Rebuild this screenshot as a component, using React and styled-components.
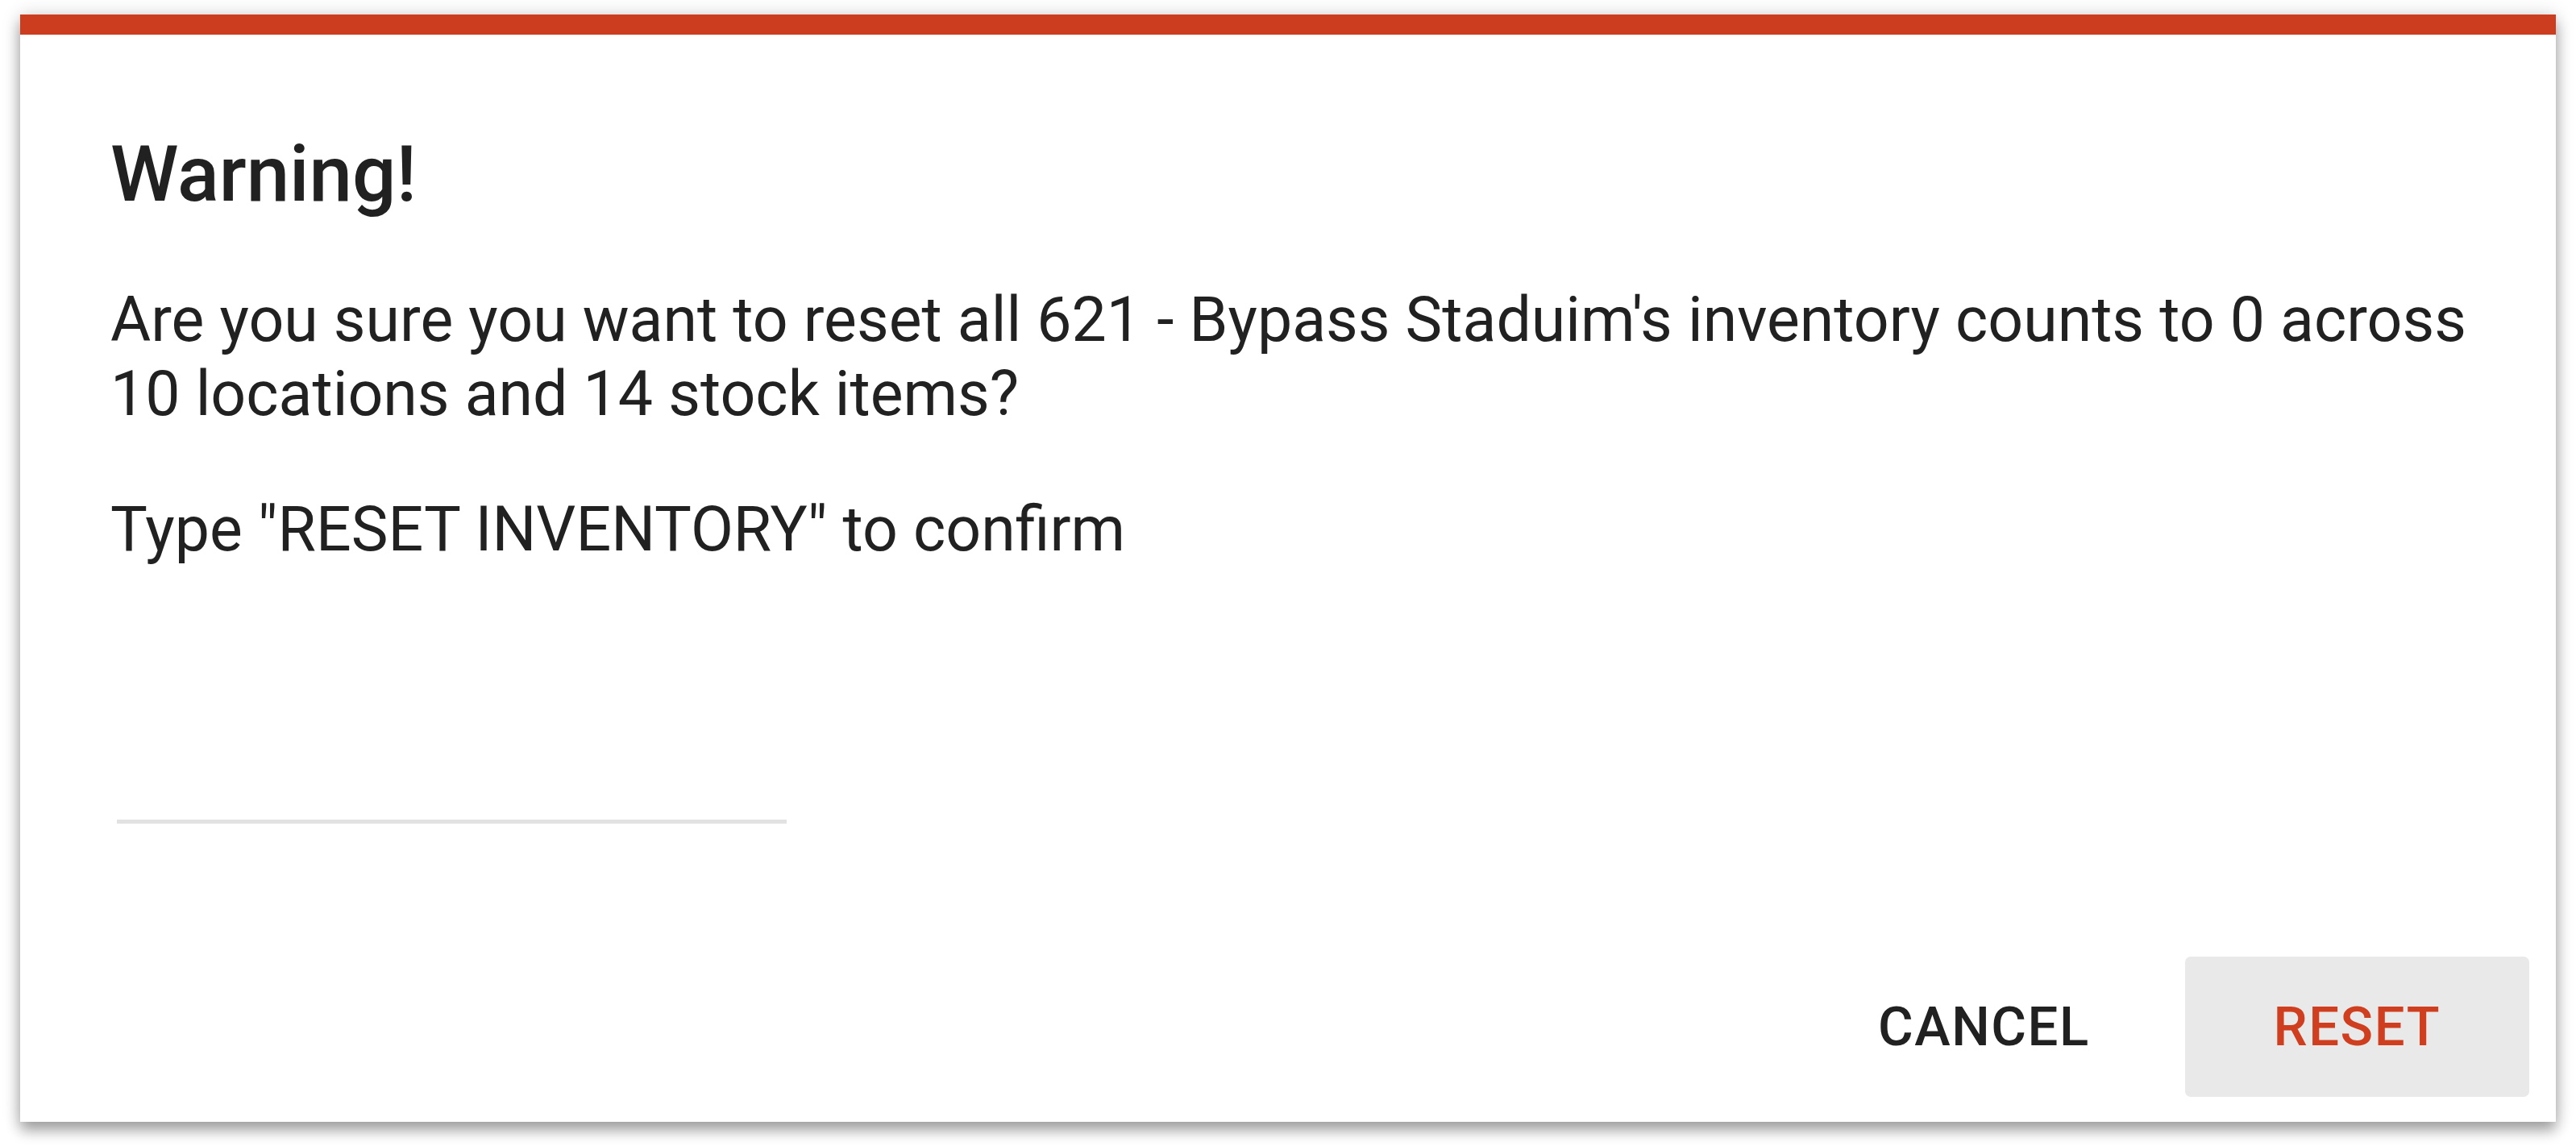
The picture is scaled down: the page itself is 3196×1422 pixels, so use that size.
import React from "react";
import styled, { createGlobalStyle } from "styled-components";

const Global = createGlobalStyle`
  html, body { margin: 0; padding: 0; background: #ffffff; }
  body { font-family: Roboto, "Noto Sans", "Liberation Sans", sans-serif; }
  * { box-sizing: border-box; }
`;

const Page = styled.div`
  width: 3196px;
  height: 1422px;
  padding: 18px 25px 30px 25px;
`;

const Dialog = styled.div`
  height: 1374px;
  background: #ffffff;
  display: flex;
  flex-direction: column;
  box-shadow: 0 11px 16px rgba(0, 0, 0, 0.32), 0 0 22px rgba(0, 0, 0, 0.16);
`;

const AccentBar = styled.div`
  height: 25px;
  flex: 0 0 25px;
  background: #cc3c1e;
`;

const Body = styled.div`
  flex: 1;
  display: flex;
  flex-direction: column;
  padding: 116px 33px 31px 112px;
`;

const Title = styled.h2`
  margin: 0 0 77px 0;
  font-size: 96px;
  line-height: 115px;
  font-weight: 500;
  color: #212121;
  letter-spacing: 0;
`;

const Text = styled.p`
  margin: 0 0 ${(p) => p.$gap || 0}px 0;
  max-width: 2980px;
  font-size: 77px;
  line-height: 92px;
  font-weight: 400;
  color: #212121;
`;

const Field = styled.div`
  margin: 0 0 0 8px;
  width: 831px;
  height: 319px;
  display: flex;
  align-items: flex-end;
`;

const Input = styled.input`
  width: 100%;
  height: 120px;
  border: none;
  border-bottom: 5px solid #e2e2e2;
  outline: none;
  background: transparent;
  font-family: inherit;
  font-size: 76px;
  color: #212121;
  padding: 0;
`;

const Actions = styled.div`
  margin-top: auto;
  display: flex;
  justify-content: flex-end;
  gap: 8px;
`;

const Button = styled.button`
  height: 174px;
  padding: 0 110px;
  border: none;
  border-radius: 7px;
  background: ${(p) => (p.$filled ? "#e9e9e9" : "transparent")};
  color: ${(p) => (p.$danger ? "#cf3f1f" : "#212121")};
  font-family: Roboto, "Liberation Sans", sans-serif;
  font-size: 67px;
  font-weight: 500;
  letter-spacing: 1.5px;
  text-transform: uppercase;
  cursor: pointer;
`;

export default function App() {
  return (
    <>
      <Global />
      <Page>
        <Dialog>
          <AccentBar />
          <Body>
            <Title>Warning!</Title>
            <Text $gap={76}>
              Are you sure you want to reset all 621 - Bypass Staduim's inventory counts to 0 across 10 locations and 14 stock items?
            </Text>
            <Text>Type "RESET INVENTORY" to confirm</Text>
            <Field>
              <Input type="text" aria-label="Confirmation" />
            </Field>
            <Actions>
              <Button>Cancel</Button>
              <Button $filled $danger>Reset</Button>
            </Actions>
          </Body>
        </Dialog>
      </Page>
    </>
  );
}
